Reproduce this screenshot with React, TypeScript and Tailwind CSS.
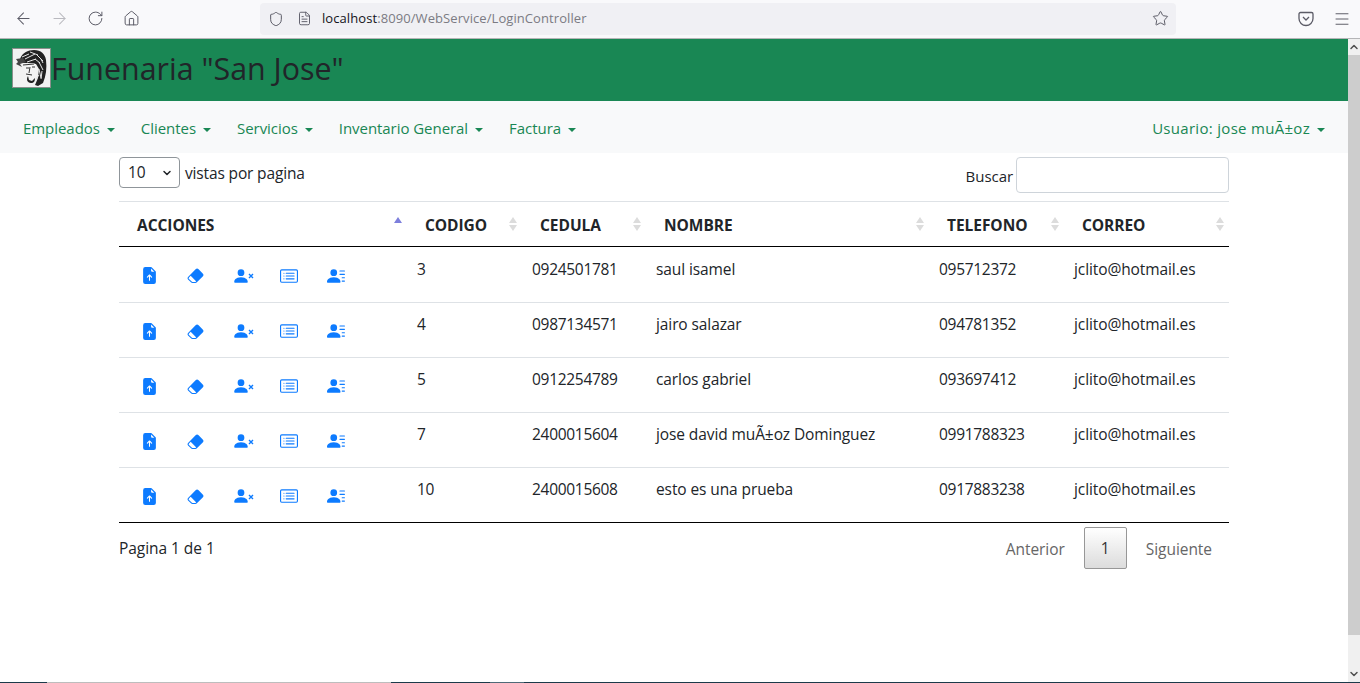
import {
  BsCardList,
  BsEraserFill,
  BsFileEarmarkArrowUpFill,
  BsPersonFill,
  BsPersonLinesFill,
} from "react-icons/bs";
import { ArrowLeft, ArrowRight, ChevronDown, ChevronUp, FileText, House, Menu, RotateCw, Shield, Star } from "lucide-react";

const menus = ["Empleados", "Clientes", "Servicios", "Inventario General", "Factura"];

const rows = [
  { id: "3", cedula: "0924501781", nombre: "saul isamel", telefono: "095712372", correo: "jclito@hotmail.es" },
  { id: "4", cedula: "0987134571", nombre: "jairo salazar", telefono: "094781352", correo: "jclito@hotmail.es" },
  { id: "5", cedula: "0912254789", nombre: "carlos gabriel", telefono: "093697412", correo: "jclito@hotmail.es" },
  { id: "7", cedula: "2400015604", nombre: "jose david muÃ±oz Dominguez", telefono: "0991788323", correo: "jclito@hotmail.es" },
  { id: "10", cedula: "2400015608", nombre: "esto es una prueba", telefono: "0917883238", correo: "jclito@hotmail.es" },
];

const columns = [
  { label: "CODIGO", width: "w-[115px]" },
  { label: "CEDULA", width: "w-[124px]" },
  { label: "NOMBRE", width: "w-[283px]" },
  { label: "TELEFONO", width: "w-[135px]" },
  { label: "CORREO", width: "w-[165px]" },
];

const Caret = () => (
  <span className="ml-[7px] inline-block h-0 w-0 border-x-[4px] border-t-[4px] border-x-transparent border-t-current align-middle" />
);

const SortArrows = ({ active }: { active?: boolean }) => (
  <span className="absolute right-[5px] top-[15px] flex flex-col gap-[2px]">
    <span
      className={`h-0 w-0 border-x-[4px] border-b-[6px] border-x-transparent ${
        active ? "border-b-[#7d7fdc]" : "border-b-[#dcdcdc]"
      }`}
    />
    <span
      className={`h-0 w-0 border-x-[4px] border-t-[6px] border-x-transparent ${
        active ? "border-t-white" : "border-t-[#dcdcdc]"
      }`}
    />
  </span>
);

const PersonX = () => (
  <span className="flex items-center text-[#0d7bff]">
    <BsPersonFill size={18} />
    <svg width="6" height="6" viewBox="0 0 6 6" className="-ml-[2px] mt-[1px]">
      <path d="M1 1l4 4M5 1L1 5" stroke="currentColor" strokeWidth="1.4" />
    </svg>
  </span>
);

// rough engraving of the logo, the original is a photo
const Logo = () => (
  <span className="flex h-10 w-[39px] shrink-0 items-center justify-center border border-[#8a8f8c] bg-[#f2f2f2]">
    <svg width="37" height="38" viewBox="0 0 37 38">
      <path d="M7 10C9 4 15 1 21 1c7 0 11 4 12 10 1 8 0 16-3 23l-5 3-3-1 3-7 1-9-3-5-8-1-6 0z" fill="#222" />
      <path d="M3 10l7-1 3 4-6 2 2 3-6-3 2-2z" fill="#444" />
      <path d="M10 15l11-1 3 5-1 7-4 6-4-2-3-7z" fill="#f4f4f4" />
      <path d="M10 16l11-1M13 19l3 0M19 18l3 0M17 18l-1 6M13 25l6 1" stroke="#333" strokeWidth="1" fill="none" />
      <path d="M15 27c-2 3-1 7 3 7 3 0 4-2 4-5l-3 3-3-1z" fill="#222" />
      <path
        d="M9 8l7-3M12 10l10-5M14 13l9-3M17 3l8 3M24 6l6 6M22 10l5 4M26 13l4 8M28 10l2 4M26 20l2 9M29 22l-1 8M23 30l3-4"
        stroke="#e6e6e6"
        strokeWidth="1"
        fill="none"
      />
    </svg>
  </span>
);

const App: React.FC = () => {
  return (
    <div className="flex h-[683px] flex-col overflow-hidden bg-white font-['Open_Sans',sans-serif] text-[15.5px] tracking-[-0.05px] text-[#212529]">
      {/* browser toolbar */}
      <div className="flex h-[39px] shrink-0 items-center border-b border-[#b5b5b7] bg-[#f9f9fb] pb-[1px] text-[#5b5b66]">
        <div className="ml-[5px] flex w-[255px] items-center">
          <span className="flex w-9 justify-center"><ArrowLeft size={19} strokeWidth={1.3} /></span>
          <span className="flex w-9 justify-center"><ArrowRight size={19} strokeWidth={1.3} className="text-[#b9b9bf]" /></span>
          <span className="flex w-9 justify-center"><RotateCw size={17} strokeWidth={1.4} /></span>
          <span className="flex w-9 justify-center"><House size={17} strokeWidth={1.4} /></span>
        </div>
        <div className="flex h-8 w-[916px] items-center rounded bg-[#f0f0f4] pl-[8px] pr-[7px] text-[13px] tracking-[0.08px]">
          <Shield size={16} strokeWidth={1.5} />
          <FileText size={15} strokeWidth={1.5} className="ml-[13px]" />
          <span className="ml-[10px] text-[#15141a]">localhost</span>
          <span className="text-[#7b7b83]">:8090/WebService/LoginController</span>
          <Star size={17} strokeWidth={1.4} className="ml-auto" />
        </div>
        <svg width="16" height="16" viewBox="0 0 16 16" className="ml-[122px]" fill="none" stroke="currentColor" strokeWidth="1.3">
          <path d="M2.500 1.500h11a1.500 1.500 0 0 1 1.500 1.500v4.500a7 7 0 0 1-14 0V3a1.500 1.500 0 0 1 1.500-1.500z" />
          <path d="M5 6l3 3 3-3" />
        </svg>
        <Menu size={18} strokeWidth={1.3} className="ml-[19px]" />
      </div>

      <div className="flex min-h-0 flex-1">
        <div className="min-w-0 flex-1">
          {/* brand */}
          <header className="flex h-[62px] items-start bg-[#198754] pl-3 pt-[9px]">
            <Logo />
            <h1 className="pt-[1px] text-[30.4px] leading-[40px] tracking-normal text-[#212529]">Funenaria "San Jose"</h1>
          </header>

          {/* menu */}
          <nav className="flex h-[52px] items-center justify-between bg-[#f8f9fa] pl-[23px] pr-[23px] pt-[2px] text-[15px] text-[#198754]">
            <div className="flex gap-[26px]">
              {menus.map((menu) => (
                <span key={menu}>
                  {menu}
                  <Caret />
                </span>
              ))}
            </div>
            <span className="tracking-[0.3px]">
              Usuario: jose muÃ±oz
              <Caret />
            </span>
          </nav>

          <main className="mx-[119px] w-[1110px]">
            <div className="flex h-[48px] items-start justify-between pt-1">
              <div className="flex h-[31px] items-center">
                <div className="flex h-[31px] w-[61px] items-center justify-between rounded border border-[#8f959a] pl-2 pr-[6px] text-[#212529]">
                  <span>10</span>
                  <ChevronDown size={12} strokeWidth={3} />
                </div>
                <span className="ml-[5px] mt-[2px] tracking-[-0.15px]">vistas por pagina</span>
              </div>
              <div className="flex items-center">
                <span className="mr-[3px] mt-[2px] text-[15px]">Buscar</span>
                <div className="h-9 w-[213px] rounded border border-[#ced4da]" />
              </div>
            </div>

            <table className="w-full table-fixed border-collapse">
              <thead>
                <tr className="h-[45px] border-y border-t-[#dee2e6] border-b-black text-left font-bold text-[#212529]">
                  <th className="relative w-[288px] pl-[18px] pt-[3px]">
                    ACCIONES
                    <SortArrows active />
                  </th>
                  {columns.map((col) => (
                    <th key={col.label} className={`relative pl-[18px] pt-[3px] ${col.width}`}>
                      {col.label}
                      <SortArrows />
                    </th>
                  ))}
                </tr>
              </thead>
              <tbody>
                {rows.map((row, i) => (
                  <tr
                    key={row.id}
                    className={`border-b ${i === 0 ? "h-[56px]" : "h-[55px]"} ${i === rows.length - 1 ? "border-black" : "border-[#dee2e6]"}`}
                  >
                    <td className="p-0 pl-[22px] pt-[2px]">
                      <div className="flex items-center text-[#0d7bff]">
                        <span className="w-[46px]"><BsFileEarmarkArrowUpFill size={17} /></span>
                        <span className="w-[45px]"><BsEraserFill size={17} /></span>
                        <span className="w-[48px]"><PersonX /></span>
                        <span className="w-[47px]"><BsCardList size={18} /></span>
                        <span><BsPersonLinesFill size={18} /></span>
                      </div>
                    </td>
                    <td className="p-0 pb-[10px] pl-[10px] tracking-[-0.3px]">{row.id}</td>
                    <td className="p-0 pb-[10px] pl-[10px] tracking-[-0.3px]">{row.cedula}</td>
                    <td className="p-0 pb-[10px] pl-[10px] tracking-[-0.1px]">{row.nombre}</td>
                    <td className="p-0 pb-[10px] pl-[10px] tracking-[-0.3px]">{row.telefono}</td>
                    <td className="p-0 pb-[10px] pl-[10px] tracking-[-0.1px]">{row.correo}</td>
                  </tr>
                ))}
              </tbody>
            </table>

            <div className="flex items-start justify-between pt-[4px]">
              <span className="mt-[10px]">Pagina 1 de 1</span>
              <div className="mr-[17px] flex items-center text-[#666]">
                <span className="mt-[4px]">Anterior</span>
                <span className="mx-[19px] flex h-[42px] w-[43px] items-center justify-center rounded-[2px] border border-[#979797] bg-gradient-to-b from-white to-[#dcdcdc] pt-[2px] text-[#333]">
                  1
                </span>
                <span className="mt-[4px]">Siguiente</span>
              </div>
            </div>
          </main>
        </div>

        {/* scrollbar */}
        <div className="flex h-full w-3 shrink-0 flex-col bg-[#f0f0f0] text-[#505050]">
          <div className="flex h-4 items-center justify-center"><ChevronUp size={12} strokeWidth={3} /></div>
          <div className="h-[580px] bg-[#cdcdcd]" />
          <div className="mt-auto flex h-4 items-center justify-center"><ChevronDown size={12} strokeWidth={3} /></div>
        </div>
      </div>

      {/* taskbar edge peeking under the window */}
      <div className="flex h-px shrink-0">
        <div className="w-[47px] bg-[#1c3a4a]" />
        <div className="w-[344px] bg-[#bdbdbd]" />
        <div className="w-[99px] bg-[#1c3a4a]" />
        <div className="w-[34px] bg-[#4f6a78]" />
        <div className="flex-1 bg-[#1c3a4a]" />
      </div>
    </div>
  );
};

export default App;
